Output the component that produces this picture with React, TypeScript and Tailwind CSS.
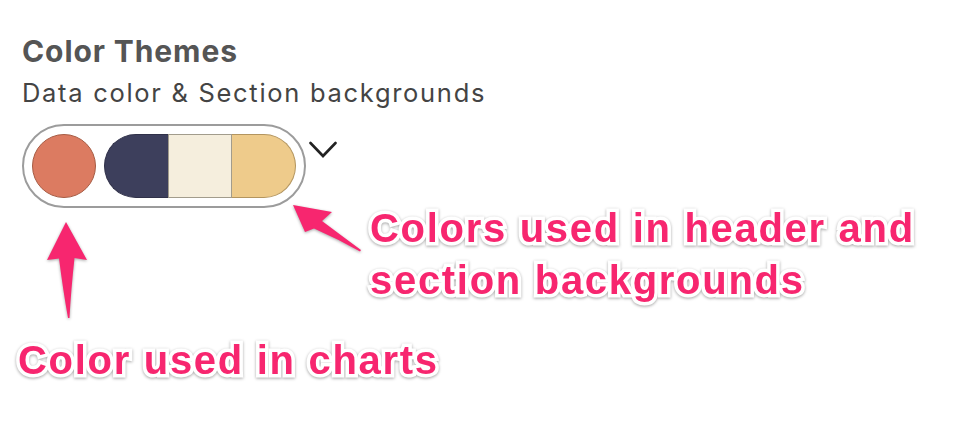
import React from "react";

const annot =
  "absolute font-bold text-[40px] leading-[52px] tracking-[1.7px] text-[#f7266f] font-['Liberation_Sans',Arial,sans-serif] [paint-order:stroke_fill] [-webkit-text-stroke:7px_#ffffff] drop-shadow-[0_1px_1.5px_rgba(0,0,0,0.35)] whitespace-nowrap";

export default function App() {
  return (
    <div className="relative w-[980px] h-[438px] bg-white overflow-hidden">
      <div className="flex flex-col pl-[22px] pt-[36px] font-['Inter','Noto_Sans',sans-serif]">
        <h2 className="text-[30px] leading-[30px] font-bold text-[#555555] tracking-[0.9px]">
          Color Themes
        </h2>
        <p className="mt-[14px] text-[25.5px] leading-[25px] text-[#444444] tracking-[1.7px]">
          Data color &amp; Section backgrounds
        </p>
        <div className="mt-[19px] flex items-start">
          <div className="flex items-center gap-[8px] p-[8px] rounded-full border-2 border-[#9c9c9c] bg-white">
            <div className="w-[64px] h-[64px] rounded-full bg-[#dc7b61] border-[1.5px] border-[#a65c44]" />
            <div className="flex h-[64px]">
              <div className="w-[64px] h-full rounded-l-full bg-[#3d3f5c] border-[1.5px] border-r-0 border-[#303149]" />
              <div className="w-[64px] h-full bg-[#f5eedd] border-y-[1.5px] border-x-[1px] border-[#a29c8c]" />
              <div className="w-[64px] h-full rounded-r-full bg-[#eecb8b] border-[1.5px] border-l-0 border-[#b3955f]" />
            </div>
          </div>
          <svg className="mt-[17px] ml-[3px]" width="28" height="18" viewBox="0 0 28 18">
            <path d="M1.5 2 L14 15 L26.5 2" fill="none" stroke="#222222" strokeWidth="2.6" strokeLinecap="round" strokeLinejoin="miter" />
          </svg>
        </div>
      </div>

      <svg
        className="absolute left-0 top-0 drop-shadow-[0_1px_1.5px_rgba(0,0,0,0.35)]"
        width="980"
        height="438"
        viewBox="0 0 980 438"
      >
        <path
          d="M66 222 L87 260 L74.5 258 Q71 290 69.5 318 L68 318 Q63 290 59 258.5 L47 260 Z"
          fill="#f7266f"
        />
        <path
          d="M293 205 L332 212 L322 221 Q342 236 361 250 L360 251.5 Q338 239 314 228.5 L305 232 Z"
          fill="#f7266f"
        />
      </svg>

      <div className={`${annot} left-[370px] top-[202px]`}>
        Colors used in header and
        <br />
        section backgrounds
      </div>
      <div className={`${annot} left-[18px] top-[334px]`}>Color used in charts</div>
    </div>
  );
}
